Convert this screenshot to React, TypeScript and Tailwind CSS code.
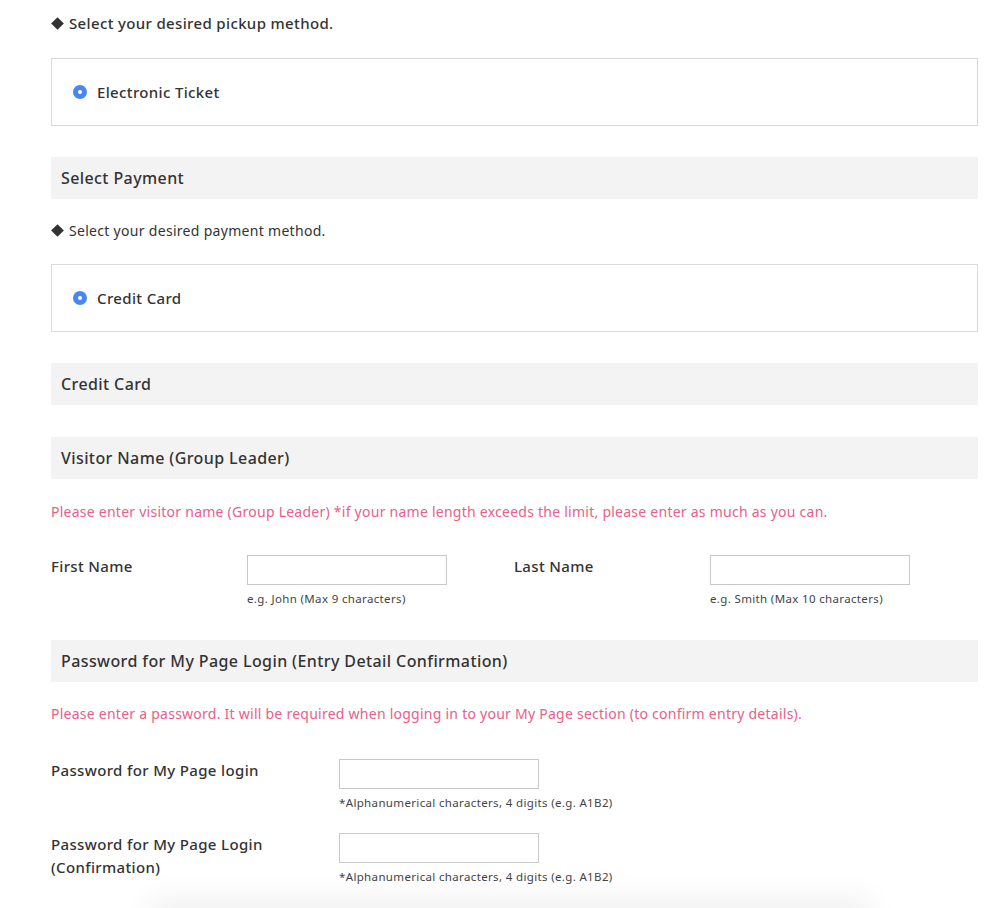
import React from 'react'

const font = { fontFamily: '"Noto Sans", "Liberation Sans", sans-serif' }

function Radio() {
  return (
    <span className="flex h-[14px] w-[14px] items-center justify-center rounded-full bg-[#4a86f0]">
      <span className="h-[4px] w-[4px] rounded-full bg-white" />
    </span>
  )
}

function Diamond() {
  return <span className="ml-[2px] mr-[7px] inline-block h-[9px] w-[9px] rotate-45 bg-[#333]" />
}

function OptionBox({ label }: { label: string }) {
  return (
    <div className="flex h-[68px] items-center gap-[10px] border border-[#d9dcdd] pl-[21px] pt-[1px]">
      <Radio />
      <span className="text-[15px] font-medium tracking-[0.35px] text-[#333]">{label}</span>
    </div>
  )
}

function SectionHeader({ children }: { children: React.ReactNode }) {
  return (
    <div className="flex h-[42px] items-center bg-[#f3f3f3] px-[10px] text-[16px] font-medium tracking-[0.4px] text-[#333]">
      {children}
    </div>
  )
}

function Field({ hint }: { hint: string }) {
  return (
    <div className="flex flex-col">
      <input className="h-[30px] w-[200px] border border-[#c8c8c8] bg-white outline-none" />
      <span className="mt-[5px] text-[11.5px] tracking-[0.35px] text-[#444]">{hint}</span>
    </div>
  )
}

export default function App() {
  return (
    <div className="relative min-h-[908px] overflow-hidden bg-white text-[#333]" style={font}>
      <div className="ml-[51px] w-[927px] pt-[12px]">
        <p className="flex items-center text-[15px] font-medium tracking-[0.35px]">
          <Diamond />
          Select your desired pickup method.
        </p>

        <div className="mt-[23px]">
          <OptionBox label="Electronic Ticket" />
        </div>

        <div className="mt-[31px]">
          <SectionHeader>Select Payment</SectionHeader>
        </div>

        <p className="mt-[21px] flex items-center text-[14px] tracking-[0.3px]">
          <Diamond />
          Select your desired payment method.
        </p>

        <div className="mt-[23px]">
          <OptionBox label="Credit Card" />
        </div>

        <div className="mt-[31px]">
          <SectionHeader>Credit Card</SectionHeader>
        </div>

        <div className="mt-[32px]">
          <SectionHeader>Visitor Name (Group Leader)</SectionHeader>
        </div>

        <p className="mt-[22px] text-[14px] tracking-[0.25px] text-[#e8608b]">
          Please enter visitor name (Group Leader) *if your name length exceeds the limit, please enter as much as you can.
        </p>

        <div className="mt-[33px] flex">
          <div className="flex w-[463px]">
            <span className="w-[196px] text-[15px] font-medium tracking-[0.35px]">First Name</span>
            <Field hint="e.g. John (Max 9 characters)" />
          </div>
          <div className="flex">
            <span className="w-[196px] text-[15px] font-medium tracking-[0.35px]">Last Name</span>
            <Field hint="e.g. Smith (Max 10 characters)" />
          </div>
        </div>

        <div className="mt-[33px]">
          <SectionHeader>Password for My Page Login (Entry Detail Confirmation)</SectionHeader>
        </div>

        <p className="mt-[21px] text-[14px] tracking-[0.25px] text-[#e8608b]">
          Please enter a password. It will be required when logging in to your My Page section (to confirm entry details).
        </p>

        <div className="mt-[35px] flex">
          <span className="w-[288px] text-[15px] font-medium leading-[23px] tracking-[0.35px]">
            Password for My Page login
          </span>
          <Field hint="*Alphanumerical characters, 4 digits (e.g. A1B2)" />
        </div>

        <div className="mt-[22px] flex">
          <span className="w-[288px] text-[15px] font-medium leading-[23px] tracking-[0.35px]">
            Password for My Page Login
            <br />
            (Confirmation)
          </span>
          <Field hint="*Alphanumerical characters, 4 digits (e.g. A1B2)" />
        </div>
      </div>

      <div className="absolute bottom-[-40px] left-[150px] h-[40px] w-[720px] shadow-[0_-10px_30px_rgba(0,0,0,0.06)]" />
    </div>
  )
}
